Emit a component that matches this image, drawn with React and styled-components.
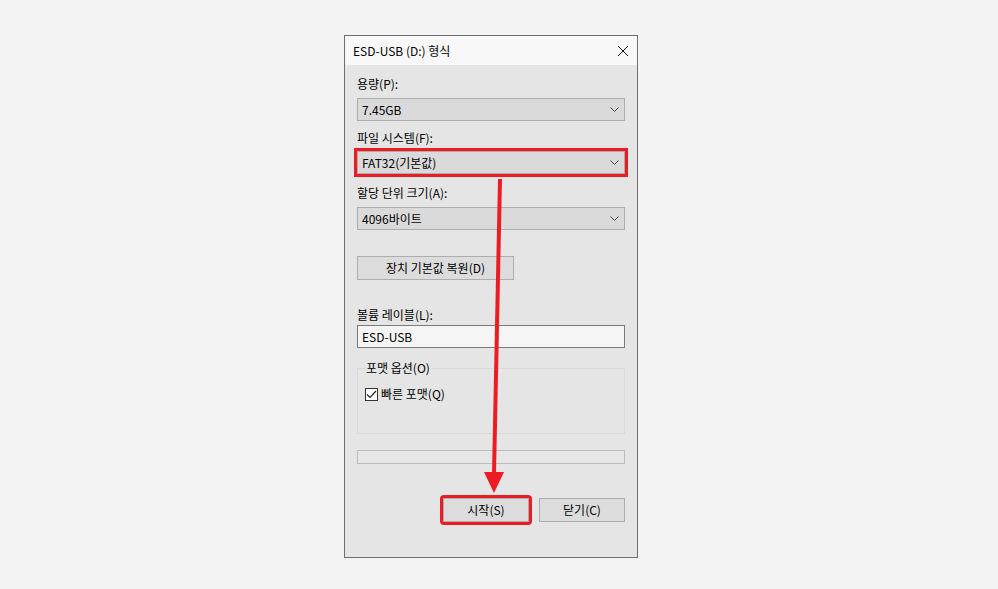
import styled, { createGlobalStyle } from "styled-components";

const GlobalStyle = createGlobalStyle`
  * { box-sizing: border-box; }
  body {
    margin: 0;
    background: #f3f3f3;
    font-family: "Noto Sans CJK KR", "Noto Sans", sans-serif;
    font-size: 12px;
    color: #000;
  }
`;

const Page = styled.div`
  position: relative;
  width: 998px;
  height: 589px;
  padding: 35px 0 0 344px;
`;

const Dialog = styled.div`
  width: 294px;
  height: 523px;
  border: 1px solid #6f6f6f;
  background: #e5e5e5;
  display: flex;
  flex-direction: column;
`;

const TitleBar = styled.div`
  height: 29px;
  background: #f8f8f8;
  display: flex;
  align-items: center;
  justify-content: space-between;
  padding: 0 9px 0 8px;
  line-height: 16px;
`;

const Body = styled.div`
  padding: 11px 12px 0 12px;
  display: flex;
  flex-direction: column;
`;

const Label = styled.label`
  display: block;
  height: 16px;
  line-height: 16px;
  margin-top: ${(p) => p.$top || 0}px;
`;

const Select = styled.div`
  height: 23px;
  margin-top: ${(p) => p.$top || 0}px;
  border: 1px solid #adadad;
  background: #dadada;
  display: flex;
  align-items: center;
  justify-content: space-between;
  padding: 0 5px 0 4px;
  line-height: 16px;
  ${(p) =>
    p.$highlight &&
    `outline: 3px solid #ed1c24; outline-offset: 0px;`}
`;

const ResetButton = styled.div`
  width: 157px;
  height: 24px;
  margin-top: 26px;
  border: 1px solid #adadad;
  background: #dcdcdc;
  display: flex;
  align-items: center;
  justify-content: center;
  line-height: 16px;
`;

const TextInput = styled.div`
  height: 23px;
  margin-top: 2px;
  border: 1px solid #7a7a7a;
  background: #f5f5f5;
  display: flex;
  align-items: center;
  padding-left: 4px;
  line-height: 16px;
`;

const Group = styled.fieldset`
  margin: 12px 0 0;
  height: 74px;
  border: 1px solid #d9d9d9;
  padding: 0 7px;
  min-width: 0;
`;

const Legend = styled.legend`
  padding: 0 1px;
  line-height: 16px;
`;

const CheckRow = styled.div`
  display: flex;
  align-items: center;
  gap: 3px;
  margin-top: 10px;
  line-height: 16px;
`;

const CheckBox = styled.span`
  width: 13px;
  height: 13px;
  border: 1px solid #333;
  background: #fff;
  display: flex;
  align-items: center;
  justify-content: center;
`;

const Progress = styled.div`
  height: 14px;
  margin-top: 16px;
  border: 1px solid #bcbcbc;
  background: #e6e6e6;
`;

const ButtonRow = styled.div`
  display: flex;
  justify-content: flex-end;
  gap: 10px;
  margin-top: 34px;
`;

const Button = styled.div`
  width: 86px;
  height: 24px;
  border: 1px solid #adadad;
  background: #dcdcdc;
  display: flex;
  align-items: center;
  justify-content: center;
  line-height: 16px;
  ${(p) => p.$highlight && `outline: 3px solid #ed1c24; outline-offset: 0px; border-radius: 1px;`}
`;

const ArrowLayer = styled.svg`
  position: absolute;
  left: 0;
  top: 0;
  pointer-events: none;
`;

function Chevron() {
  return (
    <svg width="9" height="5" viewBox="0 0 9 5">
      <path d="M0.5 0.5 L4.5 4.5 L8.5 0.5" fill="none" stroke="#444" strokeWidth="1" />
    </svg>
  );
}

function Dropdown({ value, top, highlight }) {
  return (
    <Select $top={top} $highlight={highlight}>
      <span>{value}</span>
      <Chevron />
    </Select>
  );
}

export default function App() {
  return (
    <>
      <GlobalStyle />
      <Page>
        <Dialog>
          <TitleBar>
            <span>ESD-USB (D:) 형식</span>
            <svg width="10" height="10" viewBox="0 0 10 10">
              <path d="M0 0 L10 10 M10 0 L0 10" stroke="#111" strokeWidth="1" />
            </svg>
          </TitleBar>
          <Body>
            <Label>용량(P):</Label>
            <Dropdown value="7.45GB" top={6} />
            <Label $top={9}>파일 시스템(F):</Label>
            <Dropdown value="FAT32(기본값)" top={5} highlight />
            <Label $top={11}>할당 단위 크기(A):</Label>
            <Dropdown value="4096바이트" top={6} />
            <ResetButton>장치 기본값 복원(D)</ResetButton>
            <Label $top={27}>볼륨 레이블(L):</Label>
            <TextInput>ESD-USB</TextInput>
            <Group>
              <Legend>포맷 옵션(O)</Legend>
              <CheckRow>
                <CheckBox>
                  <svg width="11" height="9" viewBox="0 0 11 9">
                    <path d="M1 4.5 L4 7.5 L10 1" fill="none" stroke="#222" strokeWidth="1.2" />
                  </svg>
                </CheckBox>
                <span>빠른 포맷(Q)</span>
              </CheckRow>
            </Group>
            <Progress />
            <ButtonRow>
              <Button $highlight>시작(S)</Button>
              <Button>닫기(C)</Button>
            </ButtonRow>
          </Body>
        </Dialog>
        <ArrowLayer width="998" height="589">
          <line x1="500" y1="179" x2="494" y2="474" stroke="#ed1c24" strokeWidth="4" />
          <polygon points="484,472 504,472 494,493" fill="#ed1c24" />
        </ArrowLayer>
      </Page>
    </>
  );
}
